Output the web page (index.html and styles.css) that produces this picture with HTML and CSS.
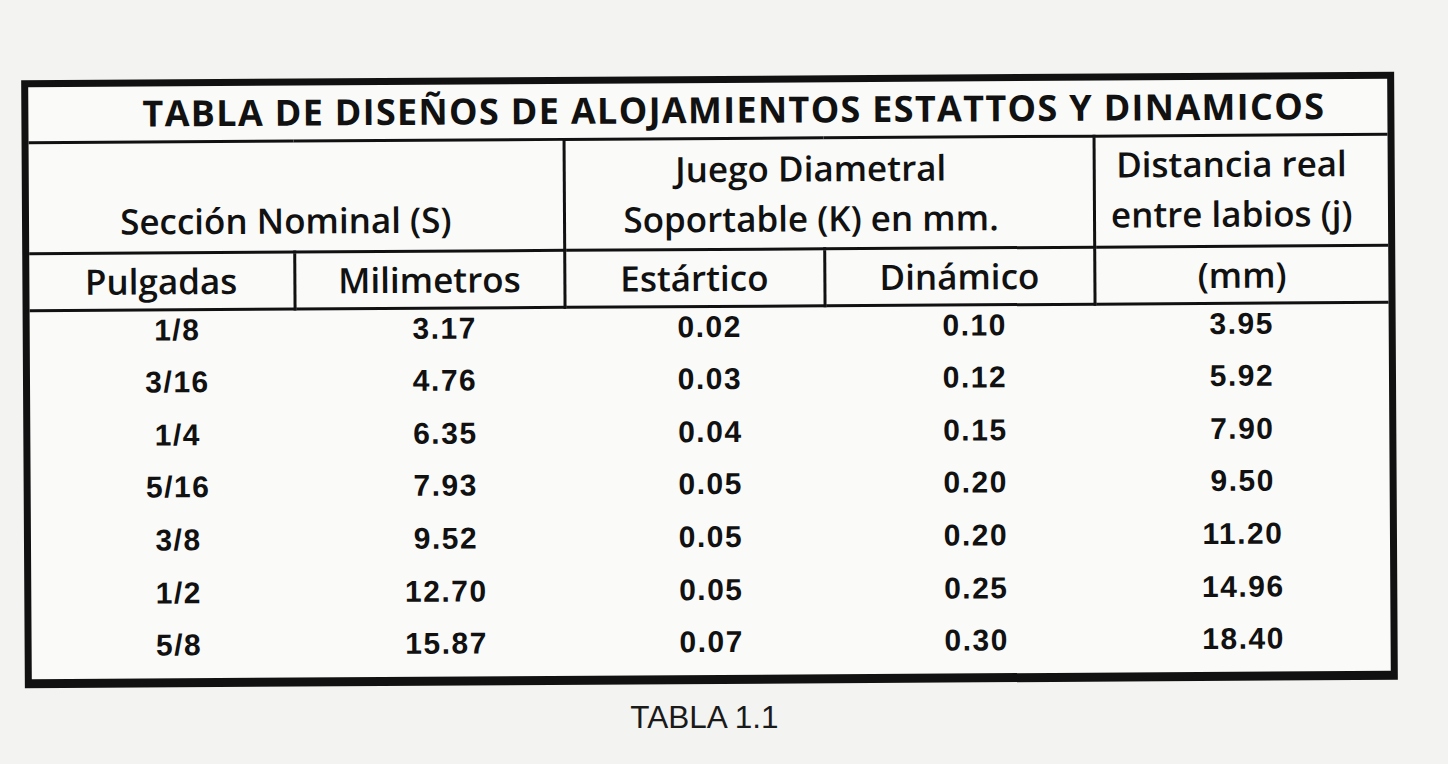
FILE: index.html
```html
<!DOCTYPE html>
<html lang="es">
<head>
<meta charset="utf-8">
<title>Tabla 1.1</title>
<link rel="stylesheet" href="styles.css">
</head>
<body>
<main class="page">
  <div class="frame">
    <table class="grid">
      <colgroup>
        <col class="c1"><col class="c2"><col class="c3"><col class="c4"><col class="c5">
      </colgroup>
      <thead>
        <tr class="r-title">
          <th colspan="5" class="title">TABLA DE DISEÑOS DE ALOJAMIENTOS ESTATTOS Y DINAMICOS</th>
        </tr>
        <tr class="r-group">
          <th colspan="2" class="h-bottom">Sección Nominal (S)</th>
          <th colspan="2" class="h-mid h-juego">Juego Diametral<br>Soportable (K) en mm.</th>
          <th class="h-mid h-right">Distancia real<br>entre labios (j)</th>
        </tr>
        <tr class="r-sub">
          <th>Pulgadas</th>
          <th>Milimetros</th>
          <th>Estártico</th>
          <th>Dinámico</th>
          <th>(mm)</th>
        </tr>
      </thead>
      <tbody>
        <tr><td>1/8</td><td>3.17</td><td>0.02</td><td>0.10</td><td class="last">3.95</td></tr>
        <tr><td>3/16</td><td>4.76</td><td>0.03</td><td>0.12</td><td class="last">5.92</td></tr>
        <tr><td>1/4</td><td>6.35</td><td>0.04</td><td>0.15</td><td class="last">7.90</td></tr>
        <tr><td>5/16</td><td>7.93</td><td>0.05</td><td>0.20</td><td class="last">9.50</td></tr>
        <tr><td>3/8</td><td>9.52</td><td>0.05</td><td>0.20</td><td class="last">11.20</td></tr>
        <tr><td>1/2</td><td>12.70</td><td>0.05</td><td>0.25</td><td class="last">14.96</td></tr>
        <tr><td>5/8</td><td>15.87</td><td>0.07</td><td>0.30</td><td class="last">18.40</td></tr>
      </tbody>
    </table>
  </div>
  <p class="caption">TABLA 1.1</p>
</main>
</body>
</html>
```

FILE: styles.css
```css
html, body {
  margin: 0;
  padding: 0;
  background: #f3f3f1;
}

.page {
  padding: 76px 0 0 23px;
  width: 1373px;
}

.frame {
  width: 1373px;
  box-sizing: border-box;
  border: 7px solid #111;
  border-bottom-width: 9px;
  background: #fafaf9;
  transform: rotate(-0.35deg);
}

.grid {
  width: 100%;
  border-collapse: collapse;
  border-style: hidden;
  table-layout: fixed;
  color: #111;
}

.c1 { width: 265px; }
.c2 { width: 270px; }
.c3 { width: 260px; }
.c4 { width: 270px; }
.c5 { width: auto; }

.grid th,
.grid td {
  border: 3px solid #111;
  padding: 0;
  text-align: center;
}

.grid th {
  font-family: "Open Sans", "DejaVu Sans", sans-serif;
  font-weight: 600;
  font-size: 35px;
  line-height: 50px;
}

.r-title { height: 55px; }
.grid th.title {
  font-size: 36px;
  font-weight: 700;
  letter-spacing: 1.3px;
  padding-left: 52px;
}

.r-group { height: 111px; }
.grid th.h-bottom {
  vertical-align: bottom;
  padding-bottom: 5px;
  padding-right: 20px;
}
.grid th.h-mid {
  vertical-align: middle;
}
.grid th.h-juego { padding-right: 36px; }
.grid th.h-right { padding-bottom: 4px; padding-right: 20px; }

.r-sub { height: 57px; }
.r-sub th { vertical-align: middle; }

.grid td {
  border-top: 0;
  border-bottom: 0;
  border-left: 0;
  border-right: 0;
  height: 52.7px;
  font-family: "Liberation Sans", Arial, sans-serif;
  font-weight: 700;
  font-size: 30px;
  letter-spacing: 1.5px;
  line-height: 36px;
  vertical-align: middle;
  padding: 0 0 12px 30px;
  box-sizing: border-box;
}

.grid td.last {
  padding-left: 0;
}

.grid tbody tr:first-child td {
  border-top: 3px solid #111;
}

.caption {
  margin: 15px 0 0 0;
  text-align: center;
  font-family: "Liberation Sans", Arial, sans-serif;
  font-size: 31.5px;
  color: #1a1a1a;
  padding-right: 10px;
}
```
